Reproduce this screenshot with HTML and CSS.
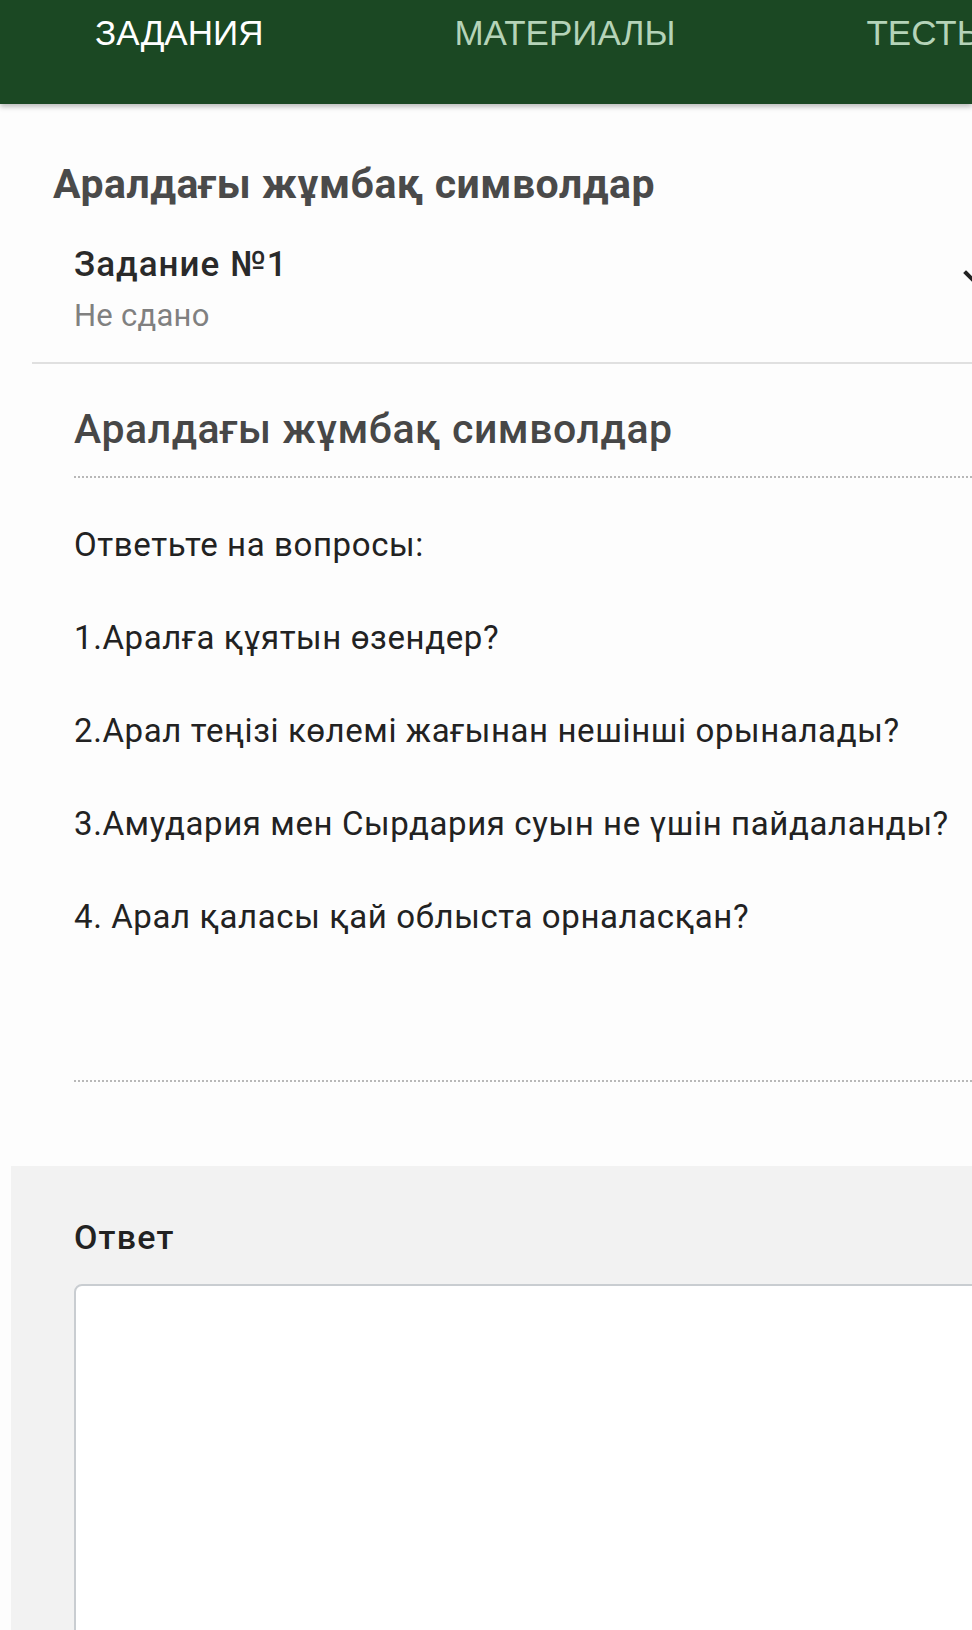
FILE: index.html
```html
<!DOCTYPE html>
<html lang="ru">
<head>
<meta charset="utf-8">
<link rel="stylesheet" href="styles.css">
</head>
<body>
<header class="tabs">
  <span class="tab active">ЗАДАНИЯ</span>
  <span class="tab">МАТЕРИАЛЫ</span>
  <span class="tab">ТЕСТЫ</span>
</header>
<main class="content">
  <h1 class="course-title">Аралдағы жұмбақ символдар</h1>
  <div class="task-row">
    <div class="task-info">
      <div class="task-name">Задание №1</div>
      <div class="task-status">Не сдано</div>
    </div>
    <svg class="chevron" width="40" height="30" viewBox="0 0 40 30"><path d="M4 4 L16 16 L28 4" fill="none" stroke="#222" stroke-width="4" stroke-linecap="square"/></svg>
  </div>
  <section class="task-body">
    <h2 class="task-heading">Аралдағы жұмбақ символдар</h2>
    <div class="task-text">
      <p>Ответьте на вопросы:</p>
      <p>1.Аралға құятын өзендер?</p>
      <p>2.Арал теңізі көлемі жағынан нешінші орыналады?</p>
      <p>3.Амудария мен Сырдария суын не үшін пайдаланды?</p>
      <p>4. Арал қаласы қай облыста орналасқан?</p>
    </div>
  </section>
  <section class="answer">
    <h3 class="answer-label">Ответ</h3>
    <div class="answer-box"></div>
  </section>
</main>
</body>
</html>
```
FILE: styles.css
```css
html, body {
  margin: 0;
  padding: 0;
}
body {
  background: #fdfdfd;
  font-family: Roboto, "Noto Sans", sans-serif;
  overflow: hidden;
  width: 972px;
  height: 1630px;
}
.tabs {
  height: 104px;
  background: #1b4823;
  display: flex;
  gap: 191px;
  padding-left: 95px;
  padding-top: 15px;
  box-sizing: border-box;
  box-shadow: 0 3px 5px rgba(0,0,0,0.25);
  white-space: nowrap;
  overflow: hidden;
  font-family: "Liberation Sans", Arial, sans-serif;
  font-size: 35px;
  line-height: 1;
  position: relative;
  z-index: 1;
}
.tab { color: #b5d3b8; }
.tab.active { color: #ffffff; }
.content {
  width: 1100px;
}
.course-title {
  margin: 0;
  padding: 57px 0 0 53px;
  font-size: 41px;
  letter-spacing: 0.5px;
  font-weight: 700;
  color: #4a4a4a;
  line-height: 46px;
}
.task-row {
  display: flex;
  justify-content: space-between;
  margin-left: 32px;
  width: 940px;
  border-bottom: 2px solid #e0e0e0;
  padding: 38px 0 28px 42px;
  box-sizing: border-box;
}
.task-name {
  font-size: 35px;
  letter-spacing: 1px;
  font-weight: 500;
  color: #2a2a2a;
  line-height: 40px;
}
.task-status {
  font-size: 31px;
  letter-spacing: 0.25px;
  color: #808080;
  line-height: 36px;
  margin-top: 13px;
}
.chevron {
  margin-right: -30px;
  margin-top: 24px;
}
.task-body {
  padding-left: 74px;
}
.task-heading {
  margin: 0;
  padding: 42px 0 24px;
  font-size: 41px;
  letter-spacing: 0.55px;
  font-weight: 500;
  color: #474747;
  line-height: 46px;
  border-bottom: 2px dotted #b8b8b8;
}
.task-text {
  padding: 49px 0 88px;
  border-bottom: 2px dotted #b8b8b8;
  font-size: 33px;
  letter-spacing: 0.6px;
  color: #222;
}
.task-text p {
  margin: 0 0 57px;
  line-height: 36px;
}
.answer {
  margin-top: 84px;
  margin-left: 11px;
  background: #f2f2f2;
  padding: 51px 0 0 63px;
  height: 464px;
  box-sizing: border-box;
  overflow: hidden;
}
.answer-label {
  margin: 0;
  font-size: 34px;
  letter-spacing: 1.2px;
  font-weight: 500;
  color: #222;
  line-height: 40px;
}
.answer-box {
  margin-top: 27px;
  height: 400px;
  background: #fff;
  border: 2px solid #c9cdd1;
  border-radius: 8px;
}
```
